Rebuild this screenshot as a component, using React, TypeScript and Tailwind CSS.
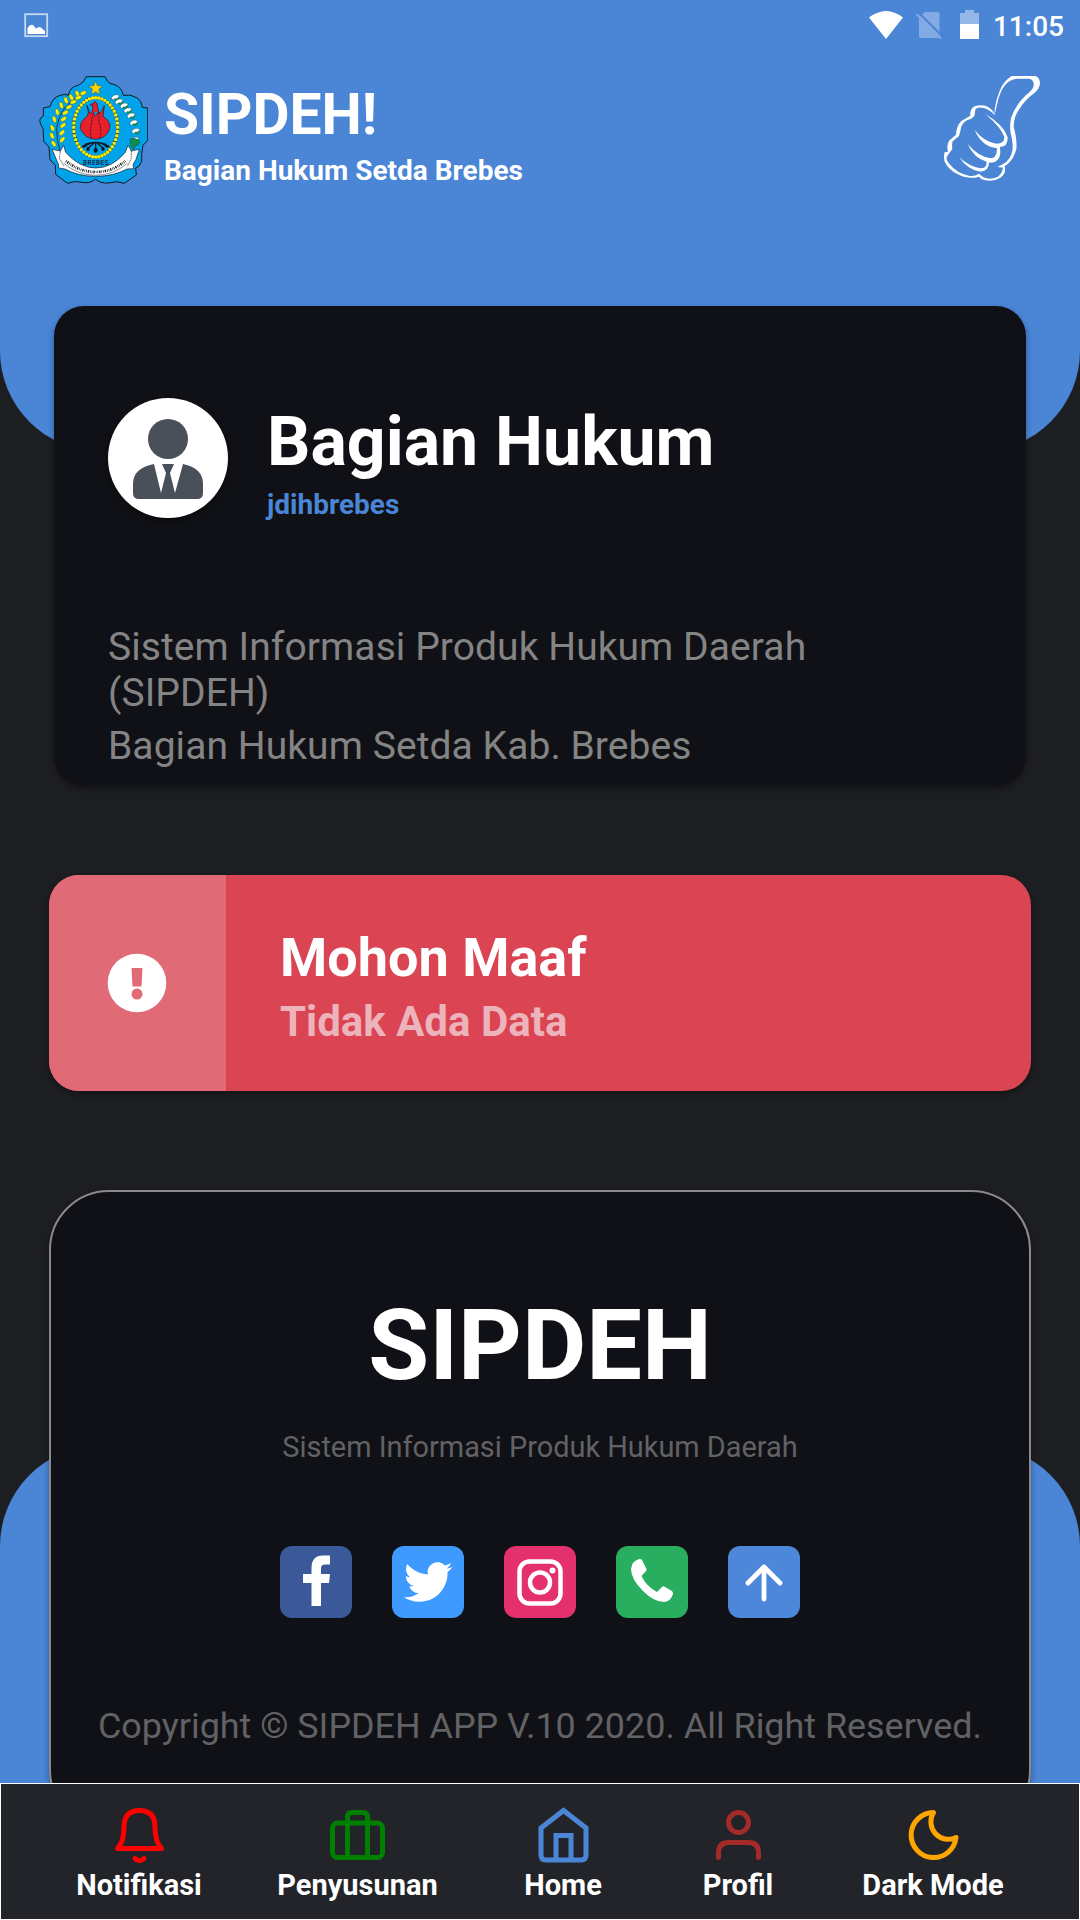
import React from "react";

function Emblem() {
  const beads = Array.from({ length: 44 }, (_, i) => {
    const a = (i / 44) * Math.PI * 2;
    return { x: 197 + 66 * Math.cos(a), y: 187 + 89 * Math.sin(a) };
  });
  const grains: [number, number, number][] = [
    [160, 84, -25], [142, 86, 65], [145, 98, -20], [124, 97, 60], [130, 111, -20],
    [108, 106, 70], [117, 126, -25], [94, 121, 75], [106, 143, -30], [82, 141, 75],
    [101, 162, -35], [73, 163, 75], [99, 181, -40], [67, 189, 70], [96, 203, -45],
    [66, 212, 65], [97, 224, -50], [71, 236, 55],
  ];
  const leaves: [number, number][] = [
    [258, 99], [269, 112], [284, 124], [295, 138], [305, 154], [313, 175], [319, 200], [316, 226],
  ];
  return (
    <svg viewBox="21 33 333 324" className="h-[108px] w-[111px] shrink-0">
      <path
        d="M169 35H225L232 48Q238 57 251 58Q276 66 280 91Q300 86 320 98Q334 106 337 127L353 129V226L339 241L335 265L335 290Q328 307 317 309L319 330L283 355Q262 346 235 354Q210 356 197 342Q180 357 157 352Q132 346 113 355L77 328L76 300L60 285L57 246L41 229L39 190Q26 172 31 160L40 153V129L60 125Q67 97 91 91Q104 85 115 91Q119 65 145 61Q162 53 169 35Z"
        fill="#00a2ea" stroke="#15171c" strokeWidth="3"
      />
      <path d="M197 47L202 62L217 63L206 73L210 88L197 80L184 88L188 73L176 63L192 62Z" fill="#ffd200" stroke="#3d3a1d" strokeWidth="1" />
      <ellipse cx="197" cy="187" rx="66" ry="89" fill="none" stroke="#55561a" strokeWidth="9" />
      {beads.map((b, i) => (
        <rect key={i} x={b.x - 4.4} y={b.y - 4.4} width="8.8" height="8.8" rx="2" fill="#fff000" />
      ))}
      <path d="M151 91Q88 124 80 190Q80 228 90 257" fill="none" stroke="#16243a" strokeWidth="2.5" />
      {grains.map(([x, y, r], i) => (
        <ellipse key={i} cx={x} cy={y} rx="10" ry="5.5" transform={`rotate(${r} ${x} ${y})`} fill="#fff000" stroke="#3e4b20" strokeWidth="1" />
      ))}
      {leaves.map(([x, y], i) => (
        <g key={i}>
          <path d={`M${x - 12} ${y + 2}Q${x - 10} ${y - 11} ${x + 7} ${y - 9}Q${x + 15} ${y} ${x + 4} ${y + 9}Z`} fill="#0a9152" />
          <path d={`M${x - 14} ${y - 1}Q${x - 5} ${y - 15} ${x + 11} ${y - 7}Q${x + 6} ${y} ${x + 2} ${y + 2}Q${x - 4} ${y - 1} ${x - 9} ${y + 7}Z`} fill="#fff" stroke="#163b3a" strokeWidth="1.2" />
        </g>
      ))}
      <path d="M300 224Q314 213 331 232Q326 241 316 243L310 254Q299 244 300 224Z" fill="#0a9152" stroke="#163b3a" strokeWidth="1.5" />
      <path d="M171 121L180 146L187 139L189 122L181 119Q191 117 195 109Q204 116 203 127L207 145L215 139L223 122L219 154Q244 171 239 190Q230 221 197 223Q163 221 151 190Q150 168 172 154L175 142Z" fill="#e8202b" stroke="#3a1118" strokeWidth="2" />
      <path d="M190 143Q185 160 186 172Q176 198 186 221M205 143Q208 158 207 173Q218 198 208 221" fill="none" stroke="#33131a" strokeWidth="2.5" strokeDasharray="7 3" />
      <path d="M191 142L197 155L203 142" fill="#00a2ea" stroke="#3a1118" strokeWidth="1.5" />
      <g fill="none" stroke="#16191f" strokeWidth="4" strokeLinecap="round">
        <path d="M165 238Q196 227 229 238M181 235L162 244M190 236L174 250M197 235V253M204 236L219 250M214 235L231 244" />
      </g>
      <g fill="#16191f">
        <ellipse cx="162" cy="244" rx="6" ry="4" /><ellipse cx="174" cy="252" rx="5" ry="6" />
        <ellipse cx="197" cy="256" rx="6" ry="8" /><ellipse cx="219" cy="252" rx="5" ry="6" /><ellipse cx="232" cy="244" rx="6" ry="4" />
      </g>
      <path d="M66 253L91 258L101 241L107 262Q149 309 197 309Q247 309 286 262L294 241L304 258L328 253L318 283L309 299L311 311L291 312Q250 334 197 334Q145 334 105 312L86 309L85 297Z" fill="#fff" stroke="#171a20" strokeWidth="2" />
      <path d="M91 259L88 280L102 304M304 258L304 280L292 304" fill="none" stroke="#171a20" strokeWidth="2" strokeDasharray="5 2" />
      <path d="M108 288Q149 321 197 321Q246 321 286 288" fill="none" stroke="#171a20" strokeWidth="8" strokeDasharray="2 3 4 3 2 3" />
      <path d="M101 295Q145 331 197 331Q249 331 292 295" fill="none" stroke="#171a20" strokeWidth="1.5" />
      <text x="197" y="299" textAnchor="middle" fontSize="19" fontWeight="700" fontFamily="Roboto" fill="#14334a" textLength="76">BREBES</text>
    </svg>
  );
}

function Thumb() {
  return (
    <svg viewBox="309 225 294 321" className="h-[107px] w-[98px]" fill="#fff">
      <path
        fillRule="evenodd"
        d="M463 343L464 328Q468 299 479 272Q491 243 515 228H586Q600 233 600 251Q598 266 583 279Q557 298 541 323Q521 348 521 380Q532 421 529 447Q521 482 494 499Q500 519 481 533Q456 549 425 538L417 530Q387 540 352 522Q326 509 314 485Q310 469 314 457L324 455Q319 437 327 422L348 404Q349 378 364 363L391 347Q389 327 404 319Q436 309 458 332Z
        M466 335L463 345Q452 331 434 325Q411 319 406 329L403 349Q393 359 382 360Q363 371 362 389L357 408Q346 417 338 424Q335 435 337 447L324 465Q313 477 329 493Q350 520 389 528Q403 530 417 521L429 531Q450 541 472 531Q486 522 489 503L473 501Q480 497 488 493Q514 479 518 446Q518 420 513 405Q508 382 513 354Q526 315 558 285Q579 269 581 257Q583 240 568 236H530Q502 238 485 270Q475 292 470 318Z"
      />
      <path d="M436 342Q491 374 503 412Q504 441 480 441L481 458Q479 486 453 488L447 487Q447 514 421 515Q382 510 358 472Q386 499 421 505Q441 505 440 485Q402 475 383 432Q414 469 452 475Q471 475 471 445Q424 439 404 390Q432 426 469 431Q494 431 493 411Q484 383 436 342Z" />
    </svg>
  );
}

function StatusBar() {
  return (
    <div className="flex h-12 shrink-0 items-start justify-between pl-6 pr-4">
      <svg viewBox="0 0 25 25" className="mt-[13px] size-[25px]" fill="none">
        <rect x="1.2" y="1.2" width="22" height="22" stroke="#c5d8f2" strokeWidth="1.8" />
        <path d="M3.500 21V15Q6 11 9 12L12 15.500Q16 12.500 18 15.500L21 18V21Z" fill="#fff" />
      </svg>
      <div className="flex items-start">
        <svg viewBox="0 0 34 28" className="mt-[11px] h-7 w-[34px]"><path d="M0 6.500Q17 -6.500 34 6.500L17 28Z" fill="#fff" /></svg>
        <svg viewBox="0 0 26 29" className="ml-[13px] mt-[11px] h-[29px] w-[26px]">
          <path d="M8.500 1H21Q23.500 1 23.500 3.500V25Q23.500 27 21 27H5Q3 27 3 25V7Z" fill="#84aae3" />
          <path d="M2 1L26 25" stroke="#4a85d6" strokeWidth="2" />
          <path d="M.5 3L25 27.500" stroke="#84aae3" strokeWidth="2.200" />
        </svg>
        <svg viewBox="0 0 19 29" className="ml-[18px] mt-[10px] h-[29px] w-[19px]">
          <path d="M0 3H5V0H14V3H19V14H0Z" fill="#94b7e7" /><path d="M0 14H19V29H0Z" fill="#fff" />
        </svg>
        <span className="ml-[14px] mt-[13px] text-[28px] leading-none font-medium">11:05</span>
      </div>
    </div>
  );
}

function Avatar() {
  return (
    <div className="size-[120px] shrink-0 overflow-hidden rounded-full bg-white shadow-[0_3px_6px_#0005]">
      <svg viewBox="0 0 120 120" className="size-full" fill="#495059">
        <circle cx="60" cy="41" r="20" />
        <path d="M25 86Q25 70 46 66L53 95L58 75L54 66H66L62 75L67 95L75 66Q95 70 95 86V95Q95 101 89 101H31Q25 101 25 95Z" />
      </svg>
    </div>
  );
}

const stroke = { fill: "none", strokeWidth: 5, strokeLinecap: "round", strokeLinejoin: "round" } as const;

const tabs = [
  {
    label: "Notifikasi", offset: "ml-[58px]",
    icon: <g stroke="#f00"><path d="M5.500 43.500H49.500Q43 37 43 22Q43 5.500 27.500 5.500Q12 5.500 12 22Q12 37 5.500 43.500Z" /><path d="M23 53.500Q27.500 58 32 53.500" /></g>,
  },
  {
    label: "Penyusunan", offset: "ml-[58.5px]",
    icon: <g stroke="#008000"><rect x="2.500" y="18" width="50" height="34.500" rx="5" /><path d="M17.500 52.500V12Q17.500 7.500 22 7.500H33Q37.500 7.500 37.500 12V52.500" /></g>,
  },
  {
    label: "Home", offset: "ml-[45.5px]",
    icon: <g stroke="#4a85d6" strokeLinejoin="miter"><path d="M5 23L27.500 5.500L50 23V50Q50 55 45 55H10Q5 55 5 50Z" /><path d="M20 54V30.500H35V54" /></g>,
  },
  {
    label: "Profil", offset: "ml-[15px]",
    icon: <g stroke="#a52a2a"><circle cx="27.500" cy="17.500" r="10" /><path d="M7.500 52.500V48Q7.500 37.500 18 37.500H37.500Q47.500 37.500 47.500 48V52.500" /></g>,
  },
  {
    label: "Dark Mode", offset: "ml-[35px]",
    icon: <g stroke="#ffa500"><path d="M27.500 7.500A22.500 22.500 0 1 0 50 32.500A17.500 17.500 0 0 1 27.500 7.500Z" /></g>,
  },
];

const socials = [
  { bg: "bg-[#3b5998]", icon: <path d="M50 9.500V18.500H45Q41 18.500 41 22V28H50L49 37H41V60H31.500V37H23V28H31.500V22Q31.500 9.500 43 9.500Z" /> },
  { bg: "bg-[#3f9aff]", icon: <path transform="translate(12 11.700) scale(2.020)" d="M23.953 4.570a10 10 0 01-2.825.775 4.958 4.958 0 002.163-2.723c-.951.555-2.005.959-3.127 1.184a4.920 4.920 0 00-8.384 4.482C7.690 8.095 4.067 6.130 1.640 3.162a4.822 4.822 0 00-.666 2.475c0 1.710.870 3.213 2.188 4.096a4.904 4.904 0 01-2.228-.616v.060a4.923 4.923 0 003.946 4.827 4.996 4.996 0 01-2.212.085 4.936 4.936 0 004.604 3.417 9.867 9.867 0 01-6.102 2.105c-.390 0-.779-.023-1.170-.067a13.995 13.995 0 007.557 2.209c9.053 0 13.998-7.496 13.998-13.985 0-.210 0-.420-.015-.630A9.935 9.935 0 0024 4.590z" /> },
  { bg: "bg-[#e4306d]", icon: <g><rect x="15.500" y="15.500" width="41" height="42" rx="10" fill="none" stroke="#fff" strokeWidth="4.500" /><circle cx="36" cy="36.500" r="10" fill="none" stroke="#fff" strokeWidth="4.500" /><circle cx="48.500" cy="24.500" r="3" /></g> },
  { bg: "bg-[#29ae60]", icon: <path d="M23 13Q25 12.500 26 14L30.500 23Q31 24 30 25L25.500 30Q30 40 41 46L46 41Q47 40 48 40.500L56 45Q57 46 57 48Q55 55 48 56Q38 56 27 45Q15 33 15 23Q16 15 23 13Z" /> },
  { bg: "bg-[#4c87d9]", icon: <path d="M36 53V21M20 37L36 21L52 37" fill="none" stroke="#fff" strokeWidth="4.800" strokeLinecap="round" strokeLinejoin="round" /> },
];

export default function App() {
  return (
    <div className="relative flex h-[1920px] w-[1080px] flex-col overflow-hidden bg-[#1d1e21] font-[Roboto,sans-serif] text-white">
      <div className="absolute inset-x-0 top-0 h-[451px] rounded-b-[100px] bg-[#4a85d6]" />
      <div className="absolute inset-x-0 bottom-0 h-[474px] rounded-t-[100px] bg-[#4a85d6]" />
      <main className="relative flex h-[1783px] flex-col overflow-hidden">
        <StatusBar />
        <header className="flex h-[258px] shrink-0 items-start pl-[37px] pr-[39px] pt-7">
          <Emblem />
          <div className="ml-4 mt-[10px] flex-1 font-bold">
            <h1 className="text-[57px] leading-none">SIPDEH!</h1>
            <p className="mt-[14px] text-[28px] leading-none">Bagian Hukum Setda Brebes</p>
          </div>
          <div className="-mt-px"><Thumb /></div>
        </header>

        <section className="mx-[54px] h-[480px] shrink-0 rounded-[30px] bg-[#101116] px-[54px] pt-[92px] shadow-[0_3px_6px_#0005]">
          <div className="flex h-[120px]">
            <Avatar />
            <div className="ml-[39px] mt-[10px] font-bold">
              <h2 className="text-[68px] leading-none">Bagian Hukum</h2>
              <p className="mt-[15px] text-[28px] leading-none text-[#4a85d6]">jdihbrebes</p>
            </div>
          </div>
          <div className="mt-[106px] text-[39px] leading-[46px] tracking-[0.07px] text-[#848484]">
            <p>Sistem Informasi Produk Hukum Daerah<br />(SIPDEH)</p>
            <p className="mt-[7px]">Bagian Hukum Setda Kab. Brebes</p>
          </div>
        </section>

        <section className="mx-[49px] mt-[89px] flex h-[216px] shrink-0 overflow-hidden rounded-[30px] bg-[#da4453] shadow-[0_3px_6px_#0005]">
          <div className="flex w-[177px] items-center justify-center bg-[#e16a77] pr-[2px]">
            <svg viewBox="0 0 60 60" className="size-[60px]">
              <circle cx="30" cy="30" r="29.300" fill="#fff" />
              <path d="M24.500 15H35.500L34.500 33.500H25.500Z" fill="#e16a77" /><circle cx="30" cy="41" r="5.500" fill="#e16a77" />
            </svg>
          </div>
          <div className="ml-[54px] mt-14 font-bold">
            <h3 className="text-[54px] leading-none">Mohon Maaf</h3>
            <p className="mt-4 text-[42px] leading-none text-[#ecb4ba]">Tidak Ada Data</p>
          </div>
        </section>

        <footer className="mx-[49px] mt-[99px] flex h-[640px] shrink-0 flex-col items-center rounded-[60px] border-2 border-[#8a8a8c] bg-[#101116] pt-[104px] shadow-[0_3px_6px_#0005]">
          <h2 className="text-[99px] leading-none font-bold">SIPDEH</h2>
          <p className="mt-[37px] text-[28.9px] leading-[30px] text-[#626264]">Sistem Informasi Produk Hukum Daerah</p>
          <div className="mt-[84px] flex gap-10">
            {socials.map((s, i) => (
              <div key={i} className={`size-[72px] overflow-hidden rounded-xl ${s.bg}`}>
                <svg viewBox="0 0 72 72" className="size-full" fill="#fff">{s.icon}</svg>
              </div>
            ))}
          </div>
          <p className="mt-[90px] text-[35.9px] leading-9 whitespace-nowrap text-[#626264]">Copyright © SIPDEH APP V.10 2020. All Right Reserved.</p>
        </footer>
      </main>

      <nav className="relative flex h-[137px] border border-white bg-[#222429] pt-[21px]">
        {tabs.map((t) => (
          <div key={t.label} className={`flex w-40 shrink-0 flex-col items-center ${t.offset}`}>
            <svg viewBox="0 0 55 60" className="h-[60px] w-[55px]" {...stroke}>{t.icon}</svg>
            <span className="mt-[6px] text-[29px] leading-none font-bold whitespace-nowrap">{t.label}</span>
          </div>
        ))}
      </nav>
    </div>
  );
}
